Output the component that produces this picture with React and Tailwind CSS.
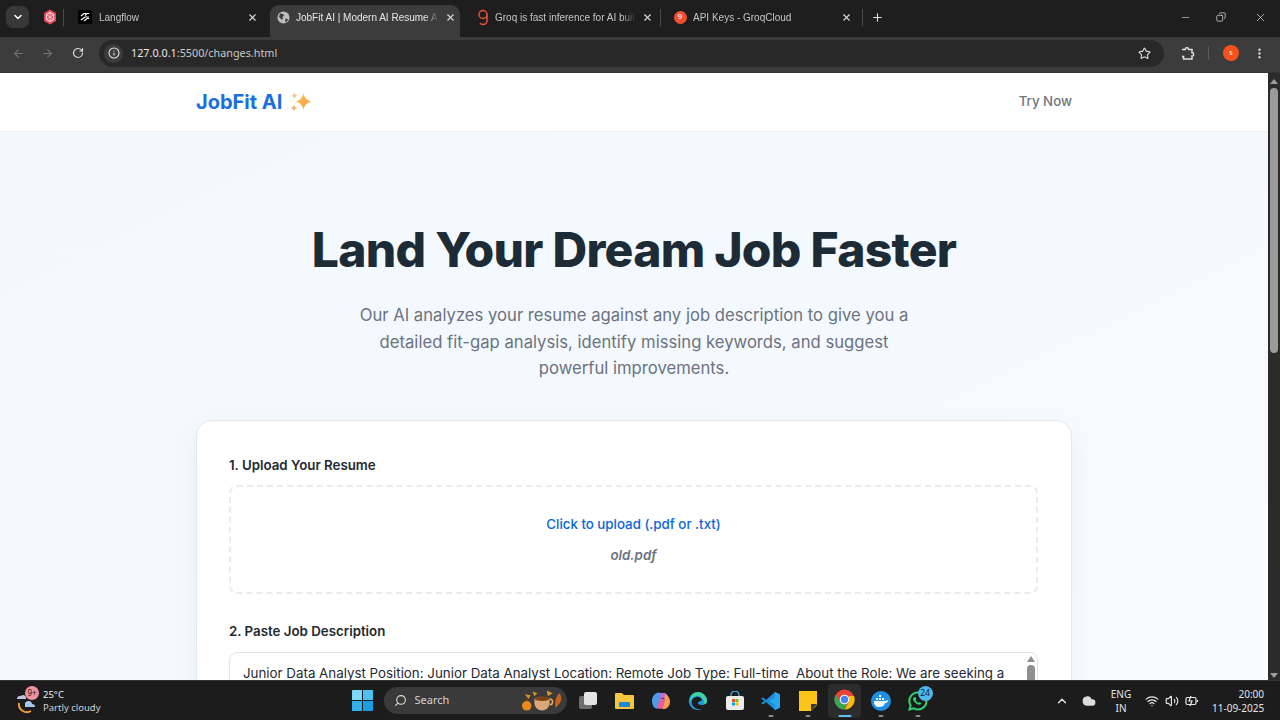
import { ArrowLeft, ArrowRight, ChevronDown, ChevronUp, Cloud, Copy, EllipsisVertical, Info, Minus, Plus, RotateCw, Search, Star, Volume2, Wifi, X } from "lucide-react";
import React from "react";

const Sparkle = () => (
  <svg width="22" height="20" viewBox="0 0 22 20">
    <defs>
      <linearGradient id="spark" x1="0" y1="0" x2="1" y2="1">
        <stop offset="0" stopColor="#fdc25a" />
        <stop offset="1" stopColor="#f79a3e" />
      </linearGradient>
    </defs>
    <path d="M13.500 1C14.500 6 16.500 8 21.500 9.500 16.500 11 14.500 13 13.500 18 12.500 13 10.500 11 5.500 9.500 10.500 8 12.500 6 13.500 1z" fill="url(#spark)" />
    <path d="M4.500 .5c.5 2.200 1 2.700 3 3.200-2 .5-2.500 1-3 3.200-.5-2.200-1-2.700-3-3.200 2-.5 2.500-1 3-3.200z" fill="#f9c08a" />
    <path d="M4 12.500c.5 2.300 1.100 2.900 3.300 3.400-2.200.5-2.800 1.100-3.300 3.400-.5-2.300-1.100-2.900-3.300-3.400 2.200-.5 2.800-1.100 3.300-3.400z" fill="#f8a860" />
  </svg>
);

const RedLogo = () => (
  <svg width="14" height="16" viewBox="0 0 14 16">
    <path d="M7 .5l6 3.500v8l-6 3.500-6-3.500v-8z" fill="#e8485c" />
    <path d="M7 3.500l3.500 2v5l-3.500 2-3.500-2v-5z" fill="none" stroke="#fbd5da" strokeWidth="1.200" />
    <path d="M7 3.500v9M3.500 5.500l7 5M10.500 5.500l-7 5" stroke="#fbd5da" strokeWidth=".8" />
  </svg>
);

const LangflowIcon = () => (
  <svg width="14" height="14" viewBox="0 0 14 14">
    <rect width="14" height="14" rx="2" fill="#000" />
    <path d="M3 6l3-2.500h2M3 10l4-3h4M6 11l3-2.500h2M7 5.500l2-2h2" stroke="#fff" strokeWidth="1.200" fill="none" />
  </svg>
);

const GlobeIcon = () => (
  <svg width="13" height="13" viewBox="0 0 13 13">
    <circle cx="6.500" cy="6.500" r="6" fill="#bdbdbd" />
    <path d="M3 2.500l3 .5 1 1.500-1.500 1.500.5 2-1.500.5L2 6zM8.500 7.500l2.500.5-1 2.500-2 .5z" fill="#3c3c3c" />
  </svg>
);

const GroqNine = () => (
  <svg width="12" height="17" viewBox="0 0 12 17" fill="none" stroke="#e8523a" strokeWidth="1.500">
    <circle cx="6" cy="5.500" r="4" />
    <path d="M10 5.500v6c0 2.500-2 4-4 4-1.200 0-2.300-.4-3-1.200" />
  </svg>
);

const GroqBadge = () => (
  <div className="w-[13px] h-[13px] rounded-full bg-[#f0502f] text-white text-[8px] flex items-center justify-center leading-none">9</div>
);

const Tab = ({ icon, title, width, active, titleGap = "ml-[7px]" }) => (
  <div
    className={`flex items-center h-[32px] pb-[8px] pl-[6px] pr-[4px] shrink-0 ${active ? "bg-[#3c3c3c] rounded-t-[9px] text-[#e6e6e6]" : "text-[#c4c4c4]"} ${width}`}
  >
    <div className="w-[14px] flex justify-center shrink-0">{icon}</div>
    <span className={`${titleGap} flex-1 text-[10px] whitespace-nowrap overflow-hidden [mask-image:linear-gradient(to_right,black_90%,transparent)]`}>{title}</span>
    <X className="w-[11px] h-[11px] ml-[6px] shrink-0 text-[#d8d8d8]" strokeWidth={2.4} />
  </div>
);

const Divider = ({ className }) => <div className={`w-px h-[17px] bg-[#4a4a4a] mb-[8px] ${className}`} />;

const TabBar = () => (
  <div className="h-[37px] bg-[#1e1e1e] flex items-end shrink-0 font-['Liberation_Sans',sans-serif]">
    <div className="flex items-center h-[32px] w-full">
      <div className="ml-[6px] w-[23px] h-[22px] mb-[8px] rounded-[7px] bg-[#383838] flex items-center justify-center">
        <ChevronDown className="w-3 h-3 text-white" strokeWidth={3} />
      </div>
      <div className="ml-[14px] w-[14px] mb-[8px]"><RedLogo /></div>
      <Divider className="ml-[6px]" />
      <Tab icon={<LangflowIcon />} title="Langflow" width="w-[190px] ml-[8px]" />
      <Tab icon={<GlobeIcon />} title="JobFit AI | Modern AI Resume A" width="w-[190px] ml-[8px]" titleGap="ml-[6px]" active />
      <Tab icon={<GroqNine />} title="Groq is fast inference for AI buil" width="w-[187px] ml-[10px]" titleGap="ml-[5px]" />
      <Divider className="ml-[3px]" />
      <Tab icon={<GroqBadge />} title="API Keys - GroqCloud" width="w-[189px] ml-[6px]" titleGap="ml-[6px]" />
      <Divider className="ml-[6px]" />
      <Plus className="ml-[8px] mb-[8px] w-[13px] h-[13px] text-[#e2e2e2]" strokeWidth={2} />
      <div className="ml-auto flex items-center mb-[8px] text-[#d8d8d8]">
        <Minus className="w-[11px] h-[11px]" strokeWidth={1.400} />
        <Copy className="ml-[25px] w-[10px] h-[10px] -scale-x-100" strokeWidth={1.800} />
        <X className="ml-[28px] mr-[13px] w-[13px] h-[13px]" strokeWidth={1.400} />
      </div>
    </div>
  </div>
);

const Toolbar = () => (
  <div className="h-[36px] bg-[#3c3c3c] flex items-center pb-[3px] shrink-0 border-b border-[#333] font-['Noto_Sans',sans-serif]">
    <ArrowLeft className="ml-[12px] w-[13px] h-[13px] text-[#737373]" />
    <ArrowRight className="ml-[16px] w-[13px] h-[13px] text-[#737373]" />
    <RotateCw className="ml-[18px] w-[12px] h-[12px] text-[#dcdcdc]" strokeWidth={2.400} />
    <div className="ml-[15px] w-[1065px] h-[27px] rounded-full bg-[#282828] flex items-center pl-[5px] pr-[13px]">
      <div className="w-[19px] h-[19px] rounded-full bg-[#3c3c3c] flex items-center justify-center">
        <Info className="w-[12px] h-[12px] text-[#e4e4e4]" strokeWidth={2.200} />
      </div>
      <span className="ml-[8px] text-[10.800px] text-[#e8e8e8]">127.0.0.1<span className="text-[#c8c8c8]">:5500/changes.html</span></span>
      <Star className="ml-auto w-[13px] h-[13px] text-[#e0e0e0]" strokeWidth={2} />
    </div>
    <svg className="ml-[16px]" width="15" height="15" viewBox="0 0 15 15" fill="none" stroke="#e0e0e0" strokeWidth="1.500">
      <path d="M2 3.500h3.200a1.700 1.700 0 0 1 3.400 0H12v3.200a1.700 1.700 0 0 1 0 3.400V13H3.500v-2.500h-1.500" />
    </svg>
    <div className="ml-[13px] w-px h-[14px] bg-[#5a5a5a]" />
    <div className="ml-[14px] w-[16px] h-[16px] rounded-full bg-[#f4511e] text-white text-[7px] flex items-center justify-center">s</div>
    <EllipsisVertical className="ml-[14px] w-[13px] h-[13px] text-[#e0e0e0]" strokeWidth={2.400} />
  </div>
);

const Scrollbar = () => (
  <div className="w-3 bg-[#2b2b2b] flex flex-col items-center shrink-0">
    <div className="mt-[6px] w-0 h-0 border-l-[4px] border-r-[4px] border-b-[5px] border-l-transparent border-r-transparent border-b-[#9e9e9e]" />
    <div className="mt-[4px] w-[8px] h-[265px] rounded-full bg-[#9b9b9b]" />
    <div className="mt-auto mb-[2px] w-0 h-0 border-l-[4px] border-r-[4px] border-t-[5px] border-l-transparent border-r-transparent border-t-[#9e9e9e]" />
  </div>
);

const Page = () => (
  <div className="flex-1 overflow-hidden bg-gradient-to-br from-[#f3f8fe] via-[#f4f9ff] to-[#f9fcff]">
    <nav className="h-[59px] bg-white border-b border-[#eceef1]">
      <div className="w-[876px] mx-auto h-full flex items-center justify-between">
        <div className="flex items-center gap-[8px] text-[20px] font-bold text-[#1a6fe0]">
          JobFit AI <Sparkle />
        </div>
        <span className="text-[13.300px] font-medium text-[#6f7680]">Try Now</span>
      </div>
    </nav>
    <section className="pt-[90px] flex flex-col items-center">
      <h1 className="text-[48px] leading-[56px] font-extrabold tracking-[-0.73px] text-[#1c2b36]">Land Your Dream Job Faster</h1>
      <p className="mt-[24px] w-[570px] text-center text-[16.660px] leading-[26.700px] text-[#6b7280]">
        Our AI analyzes your resume against any job description to give you a detailed fit-gap analysis, identify missing keywords, and suggest powerful improvements.
      </p>
      <div className="mt-[38px] w-[876px] bg-white rounded-[16px] border border-[#e5e7eb] shadow-[0_10px_30px_rgba(0,0,0,0.05)] pl-[32px] pr-[33px] pt-[35px]">
        <div className="text-[13.300px] leading-[18px] font-semibold text-[#1f2933]">1. Upload Your Resume</div>
        <div className="mt-[11px] h-[109px] rounded-[8px] border-2 border-dashed border-[#e9ebee] flex flex-col items-center pt-[28px]">
          <span className="text-[13.300px] leading-[18px] font-medium text-[#0b66d8]">Click to upload (.pdf or .txt)</span>
          <span className="mt-[13px] text-[13.300px] leading-[18px] italic font-semibold text-[#6b7280]">old.pdf</span>
        </div>
        <div className="mt-[28px] text-[13.300px] leading-[18px] font-semibold text-[#1f2933]">2. Paste Job Description</div>
        <div className="mt-[12px] h-[200px] rounded-[8px] border border-[#e2e4e8] flex pl-[13px]">
          <div className="flex-1 pt-[10px] pr-[12px] text-[13.330px] leading-[20px] text-[#1f2933] whitespace-pre-wrap">
            Junior Data Analyst Position: Junior Data Analyst Location: Remote Job Type: Full-time  About the Role: We are seeking a motivated Junior Data Analyst to join our team.
          </div>
          <div className="w-[12px] flex flex-col items-center pt-[3px]">
            <div className="w-0 h-0 border-l-[4px] border-r-[4px] border-b-[6px] border-l-transparent border-r-transparent border-b-[#8f8f8f]" />
            <div className="mt-[3px] w-[8px] h-[60px] rounded-full bg-[#8f8f8f]" />
          </div>
        </div>
      </div>
    </section>
  </div>
);

const TaskIcon = ({ children, active, dot }) => (
  <div className={`relative w-[33px] h-[34px] mx-[1.850px] rounded-[4px] flex items-center justify-center ${active ? "bg-[#2c2c2c]" : ""}`}>
    {children}
    {dot && <div className="absolute bottom-[1px] left-1/2 -translate-x-1/2 w-[5px] h-[2px] rounded bg-[#8a8a8a]" />}
    {active && <div className="absolute bottom-[1px] left-1/2 -translate-x-1/2 w-[13px] h-[2px] rounded bg-[#5cc3f0]" />}
  </div>
);

const Taskbar = () => (
  <div className="h-10 bg-[#1c1c1c] border-t border-[#333] flex items-center shrink-0 relative text-white font-['Noto_Sans',sans-serif]">
    <div className="relative ml-[16px] w-[22px] h-[26px]">
      <svg width="22" height="24" viewBox="0 0 22 24" className="mt-[2px]">
        <path d="M1 9a3 3 0 0 1 4-3 3 3 0 0 1 5 3H1z" fill="#b9c6dc" />
        <path d="M3 13a8 8 0 0 0 12 8 8 8 0 0 1-12-8z" fill="#f29b38" stroke="#f29b38" strokeWidth="2" />
        <path d="M9 15a3.500 3.500 0 0 1 7-1 3 3 0 0 1 3 3H9z" fill="#a8c8ee" />
      </svg>
      <div className="absolute top-[-2px] left-[9px] w-[14px] h-[14px] rounded-full bg-[#f2909c] text-[8px] text-[#222] flex items-center justify-center">9+</div>
    </div>
    <div className="ml-[5px] flex flex-col text-[9.500px] leading-[13px]">
      <span className="text-[#f0f0f0]">25°C</span>
      <span className="text-[#cfcfcf]">Partly cloudy</span>
    </div>
    <div className="ml-[251px] w-[21px] h-[21px] grid grid-cols-2 gap-[1px]">
      <div className="bg-[#7fd8f8] rounded-tl-[1px]" />
      <div className="bg-[#4cc2f1]" />
      <div className="bg-[#31b0ea]" />
      <div className="bg-[#1b9de2] rounded-br-[1px]" />
    </div>
    <div className="ml-[11px] w-[183px] h-[27px] rounded-full bg-[#3a3a3a] flex items-center pl-[10px] pr-[2px]">
      <Search className="w-[13px] h-[13px] text-[#e0e0e0] -scale-x-100" strokeWidth={2} />
      <span className="ml-[8px] text-[11px] text-[#d4d4d4]">Search</span>
      <svg className="ml-auto" width="44" height="24" viewBox="0 0 46 24">
        <circle cx="6" cy="17" r="5" fill="#e88a1d" />
        <path d="M6 12v-3" stroke="#7a4a16" strokeWidth="1.500" />
        <path d="M4 5l6 1-2 4zM12 2l5 2-3 3zM27 1l6 3-5 3z" fill="#d9962a" />
        <path d="M14 9h16v5a8 8 0 0 1-16 0z" fill="#d9a878" />
        <ellipse cx="22" cy="9.500" rx="8" ry="2.500" fill="#7a4318" />
        <path d="M30 10a3 3 0 0 1 0 6" stroke="#e8b05c" strokeWidth="1.500" fill="none" />
        <path d="M40 4c4 4 2 11-4 15-1-5 0-11 4-15z" fill="#c8641e" />
      </svg>
    </div>
    <div className="ml-[3px] flex items-center">
      <TaskIcon>
        <svg width="20" height="20" viewBox="0 0 20 20">
          <rect x="1" y="5" width="13" height="13" rx="2" fill="#6e6e6e" />
          <rect x="6" y="1" width="13" height="13" rx="2" fill="#e4e4e4" />
        </svg>
      </TaskIcon>
      <TaskIcon>
        <svg width="21" height="20" viewBox="0 0 21 20">
          <path d="M1 3a1 1 0 0 1 1-1h6l2 2h9a1 1 0 0 1 1 1v12a1 1 0 0 1-1 1H2a1 1 0 0 1-1-1z" fill="#f7c83f" />
          <rect x="5" y="11" width="11" height="5" rx="1" fill="#1e88d8" />
        </svg>
      </TaskIcon>
      <TaskIcon>
        <svg width="20" height="20" viewBox="0 0 20 20">
          <path d="M6 2c2-1 4 0 4 2l-2 12c-1 2-3 2-4 1-2-1-3-4-3-7 0-4 2-7 5-8z" fill="#4a9be8" />
          <path d="M8 2h5c2 0 3 1 3 3l-2 2-5 1z" fill="#b66fe0" />
          <path d="M14 3c3 1 5 4 5 8 0 3-2 6-5 7h-3l2-7z" fill="#f5a04a" />
          <path d="M9 8h5l-1 6c-1 3-3 4-5 4l-2-2z" fill="#e85fa0" />
        </svg>
      </TaskIcon>
      <TaskIcon>
        <svg width="20" height="20" viewBox="0 0 20 20">
          <path d="M10 1a9 9 0 0 1 9 9c0 3-3 4-5 4-3 0-4-1-4-2 0-2 3-1 4-3-1-3-4-4-6-3C4 7 3 10 4 13c1 4 6 6 10 5a9 9 0 1 1-4-17z" fill="#1f9ce0" />
          <path d="M10 1a9 9 0 0 1 9 9c0 2-1 3-3 3 1-5-4-9-8-8-3 1-5 3-6 6a9 9 0 0 1 8-10z" fill="#3dd6a0" />
        </svg>
      </TaskIcon>
      <TaskIcon>
        <svg width="20" height="20" viewBox="0 0 20 20">
          <path d="M6 5V4a4 4 0 0 1 8 0v1" fill="none" stroke="#3bb5e8" strokeWidth="1.300" />
          <rect x="1" y="5" width="18" height="14" rx="2" fill="#ececec" />
          <rect x="7" y="8" width="3" height="3" fill="#f25022" />
          <rect x="10.500" y="8" width="3" height="3" fill="#7fba00" />
          <rect x="7" y="11.500" width="3" height="3" fill="#00a4ef" />
          <rect x="10.500" y="11.500" width="3" height="3" fill="#ffb900" />
        </svg>
      </TaskIcon>
      <TaskIcon dot>
        <svg width="20" height="20" viewBox="0 0 20 20">
          <path d="M14 1l5 2.500v13L14 19 5 11l-3 2.500L0 12l3.500-2L0 7.500 2 6.500 5 9z" fill="#1c8fdc" />
          <path d="M14 1l5 2.500v13L14 19zM14 6l-5 4 5 4z" fill="#29a8f0" fillRule="evenodd" />
        </svg>
      </TaskIcon>
      <TaskIcon dot>
        <svg width="18" height="20" viewBox="0 0 18 20">
          <path d="M0 0h18v14l-6 6H0z" fill="#fcc419" />
          <path d="M18 13l-6 7v-7z" fill="#3a3a3a" />
        </svg>
      </TaskIcon>
      <TaskIcon active>
        <svg width="21" height="21" viewBox="0 0 21 21" className="mb-[3px]">
          <circle cx="10.500" cy="10.500" r="10" fill="#ea4335" />
          <path d="M10.500 20.500a10 10 0 0 1-8.700-15l5 8.500 6 1.500z" fill="#34a853" />
          <path d="M20 7a10 10 0 0 1-9 13.500l4-8V7z" fill="#fbbc05" />
          <circle cx="10.500" cy="10.500" r="4.800" fill="#fff" />
          <circle cx="10.500" cy="10.500" r="3.700" fill="#4285f4" />
        </svg>
      </TaskIcon>
      <TaskIcon dot>
        <svg width="20" height="20" viewBox="0 0 20 20">
          <circle cx="10" cy="10" r="10" fill="#1d8fe6" />
          <path d="M3 10h11c1 0 2-1 3-1 0 2-1 3-3 3-1 3-3 4-6 4-3 0-5-2-5-6z" fill="#fff" />
          <path d="M5 7h2v2H5zM8 7h2v2H8zM11 7h2v2h-2zM8 4h2v2H8z" fill="#fff" />
        </svg>
      </TaskIcon>
      <TaskIcon dot>
        <svg width="20" height="20" viewBox="0 0 20 20">
          <path d="M10 1.500a8.500 8.500 0 0 1 0 17c-1.500 0-3-.4-4.300-1.100L1.500 18.500l1.100-4.100A8.500 8.500 0 0 1 10 1.500z" fill="none" stroke="#2dd36f" strokeWidth="2" />
          <path d="M7 6c1 0 1.500 2 1 2.500-.5.500-.3 1 .5 2s1.500 1.500 2 1 2.500 0 2.500 1-1.500 1.500-3 1c-2-.7-4.500-3-5-5-.2-1.500 1-2.500 2-2.500z" fill="#2dd36f" />
        </svg>
        <div className="absolute top-[2px] right-[2px] w-[15px] h-[15px] rounded-full bg-[#4cb8ea] text-[8.500px] text-[#10232c] flex items-center justify-center">24</div>
      </TaskIcon>
    </div>
    <div className="ml-auto flex items-center pr-[16px]">
      <ChevronUp className="w-[14px] h-[14px] text-[#e8e8e8]" strokeWidth={2.200} />
      <Cloud className="ml-[13px] w-[14px] h-[14px] text-[#dcdcdc] fill-[#dcdcdc]" />
      <div className="ml-[13px] w-[24px] text-center text-[10px] leading-[14px] text-[#e4e4e4]">ENG<br />IN</div>
      <Wifi className="ml-[12px] w-[14px] h-[14px] text-[#e8e8e8]" />
      <Volume2 className="ml-[6px] w-[14px] h-[14px] text-[#e8e8e8]" />
      <svg className="ml-[6px]" width="14" height="14" viewBox="0 0 14 14" fill="none" stroke="#e8e8e8" strokeWidth="1.200">
        <rect x="1" y="3.500" width="10" height="7" rx="1.500" />
        <path d="M12.500 6v2M6 2L4 7h3l-2 5" />
      </svg>
      <div className="ml-[13px] w-[52px] text-right text-[10px] leading-[14px] text-[#e4e4e4] whitespace-nowrap">20:00<br />11-09-2025</div>
    </div>
  </div>
);

export default function App() {
  return (
    <div className="w-[1280px] h-[720px] overflow-hidden flex flex-col font-['Inter',sans-serif]">
      <TabBar />
      <Toolbar />
      <div className="flex-1 flex min-h-0">
        <Page />
        <Scrollbar />
      </div>
      <Taskbar />
    </div>
  );
}
